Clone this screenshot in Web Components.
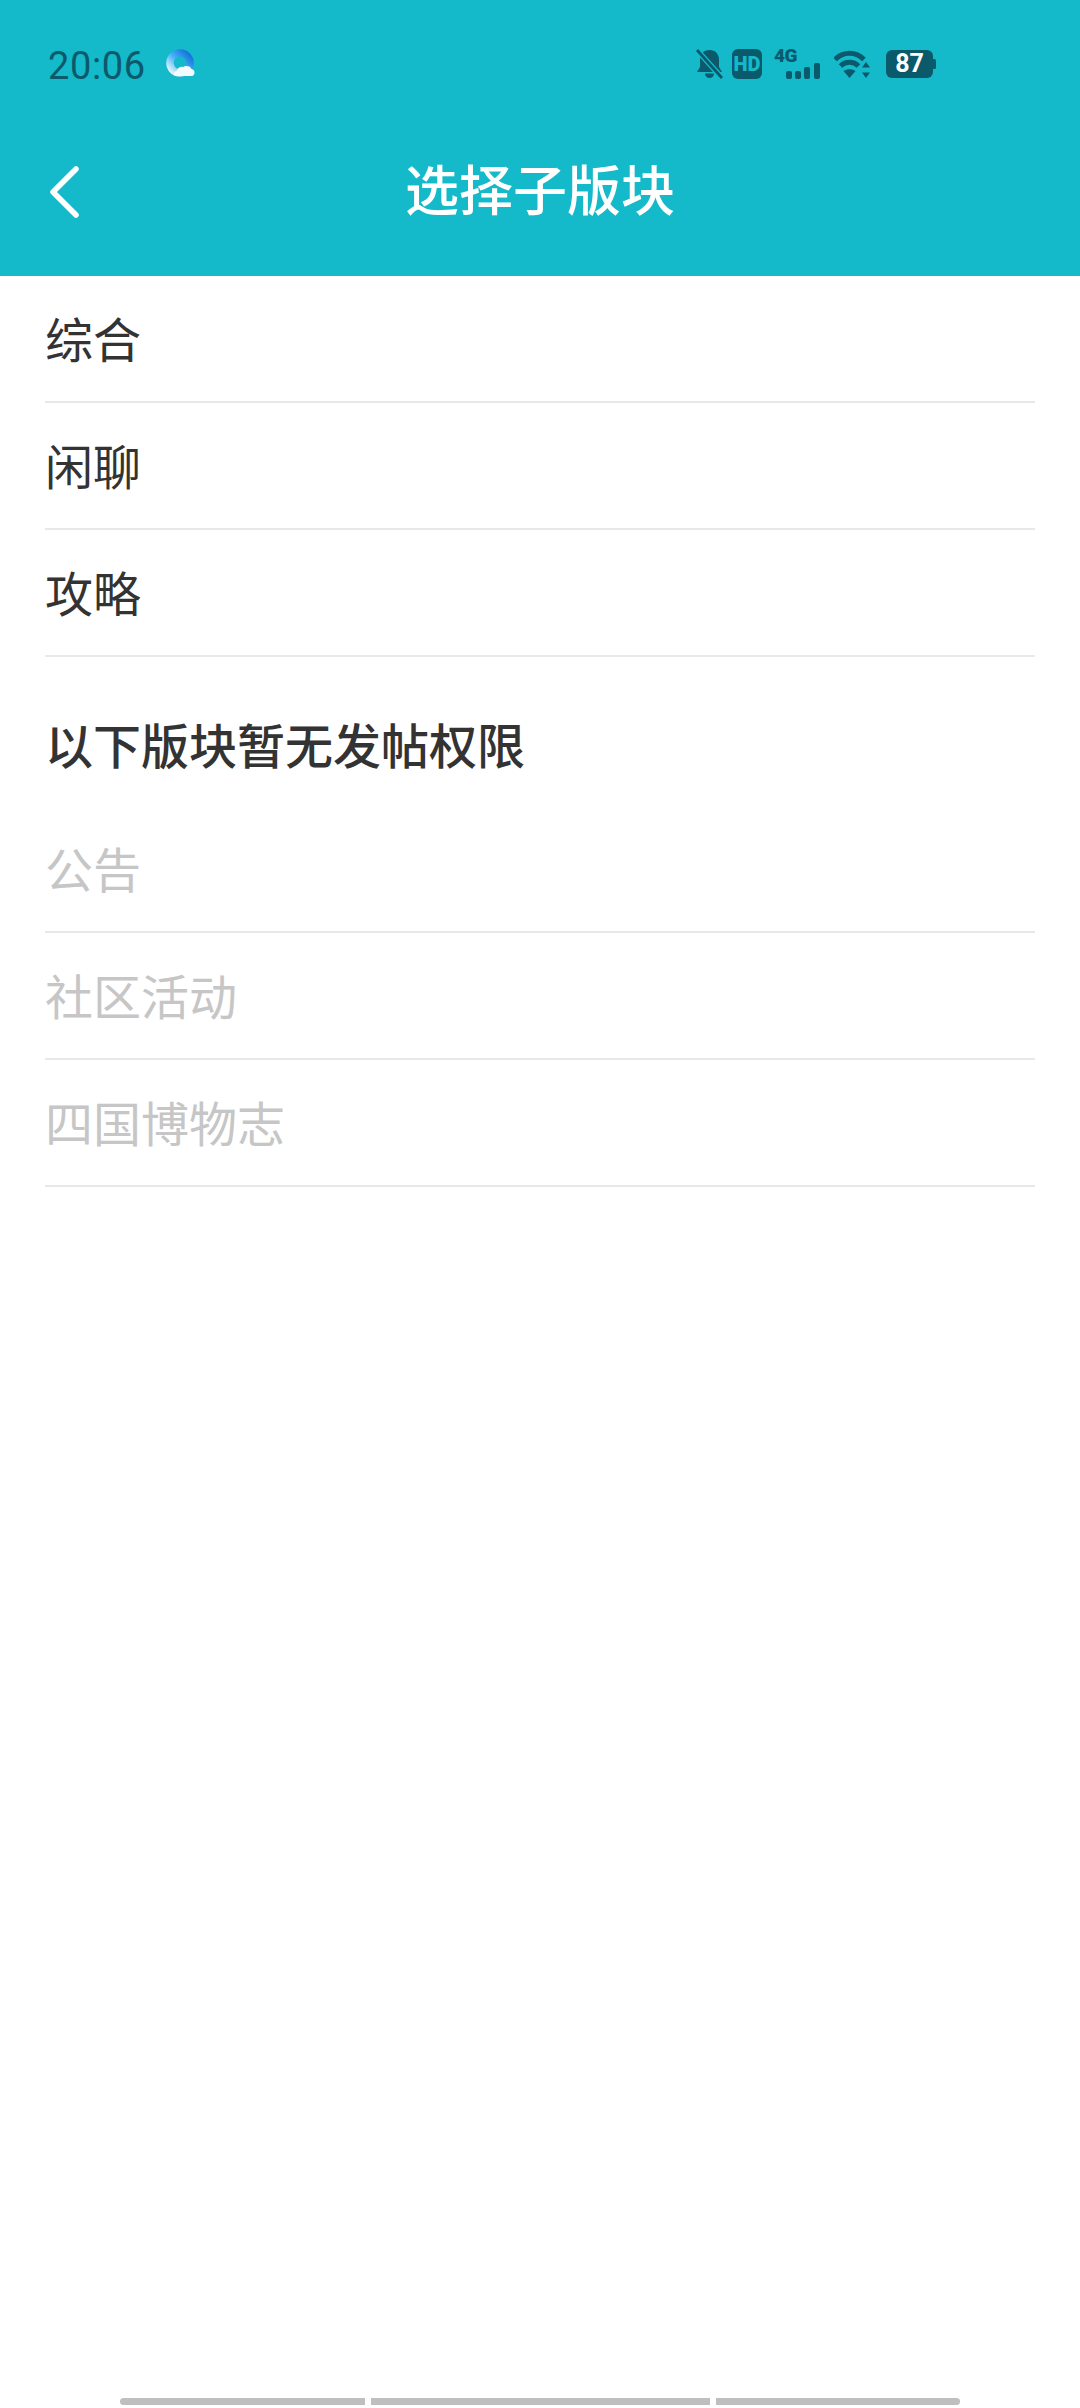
<!DOCTYPE html>
<html lang="zh">
<head>
<meta charset="utf-8">
<title>选择子版块</title>
<style>
  html, body { margin: 0; padding: 0; background: #fff; }
  body { width: 1080px; height: 2408px; overflow: hidden; font-family: "Noto Sans CJK SC", "Noto Sans", sans-serif; display: flex; flex-direction: column; }
</style>
</head>
<body>
<app-header title="选择子版块"></app-header>
<forum-list>
  <forum-row>综合</forum-row>
  <forum-row>闲聊</forum-row>
  <forum-row>攻略</forum-row>
  <section-title>以下版块暂无发帖权限</section-title>
  <forum-row disabled>公告</forum-row>
  <forum-row disabled>社区活动</forum-row>
  <forum-row disabled>四国博物志</forum-row>
</forum-list>
<nav-hint></nav-hint>

<script>
class StatusBar extends HTMLElement {
  constructor() {
    super();
    this.attachShadow({ mode: "open" });
    this.shadowRoot.innerHTML = `
      <style>
        :host { display: flex; align-items: center; height: 128px; padding: 0 144px 0 48px; box-sizing: border-box; color: #0a5a6b; }
        .time { font: 400 38px/1 Roboto, sans-serif; letter-spacing: 0.6px; margin-right: 20px; padding-top: 3px; }
        .cloud { display: block; width: 30px; height: 30px; }
        .icons { margin-left: auto; display: flex; align-items: center; }
        svg { display: block; }
        .hd { width: 30px; height: 30px; border-radius: 6px; background: #0a5a6b; color: #14b9ca; font: 900 20px/30px Roboto, sans-serif; text-align: center; margin: 0 12px 0 9px; }
        .net { position: relative; width: 46px; height: 30px; margin-right: 14px; }
        .net span { position: absolute; left: 0; top: -3px; font: 900 19px/20px Roboto, sans-serif; letter-spacing: -0.5px; }
        .net svg { position: absolute; right: 0; bottom: 0; }
        .batt { position: relative; width: 50px; height: 28px; margin-left: 16px; }
        .batt svg { position: absolute; inset: 0; }
        .batt span { position: absolute; left: 0; right: 3px; top: 0; text-align: center; color: #fff; font: 700 25px/28px Roboto, sans-serif; }
      </style>
      <span class="time">20:06</span>
      <svg class="cloud" viewBox="0 0 30 30">
        <defs>
          <linearGradient id="ring" x1="0" y1="1" x2="1" y2="0">
            <stop offset="0" stop-color="#f2fbfe"/>
            <stop offset="0.5" stop-color="#45b0f6"/>
            <stop offset="1" stop-color="#0f6fd8"/>
          </linearGradient>
        </defs>
        <circle cx="14" cy="14" r="10" fill="none" stroke="url(#ring)" stroke-width="7.5"/>
        <path d="M10 27c-3 0-3-5 .5-5 .8-3 4-5 7-4 1-1 6-2 8 2 4 .3 4 7 0 7z" fill="#f4fbfe"/>
      </svg>
      <div class="icons">
        <svg width="27" height="30" viewBox="0 0 27 30">
          <path d="M13.500 1c6 0 9.500 4 9.500 10v7l3 5H1l3-5v-7C4 5 7.500 1 13.500 1z" fill="currentColor"/>
          <path d="M9 24.500h9a4.500 4.500 0 0 1-9 0z" fill="currentColor"/>
          <path d="M1 1l25 28" stroke="#14b9ca" stroke-width="5.500"/>
          <path d="M1 1l25 28" stroke="currentColor" stroke-width="2.800"/>
        </svg>
        <div class="hd">HD</div>
        <div class="net">
          <span>4G</span>
          <svg width="34" height="16" viewBox="0 0 34 16" fill="currentColor">
            <rect x="0" y="8" width="6" height="8" rx="2"/>
            <rect x="9" y="8" width="6" height="8" rx="2"/>
            <rect x="18" y="4" width="6" height="12" rx="2"/>
            <rect x="28" y="0" width="6" height="16" rx="2"/>
          </svg>
        </div>
        <svg width="36" height="28" viewBox="0 0 36 28" fill="none" stroke="currentColor" stroke-width="5">
          <path d="M1 9.500c8-8.500 21-8.500 29 0"/>
          <path d="M6.500 16c5-5 13-5 18 0"/>
          <path d="M15.500 28l-6-7c3.500-2.500 8.500-2.500 12 0z" fill="currentColor" stroke="none"/>
          <path d="M32 12l4 5.500h-8zM32 28l4-5.500h-8z" fill="currentColor" stroke="none"/>
        </svg>
        <div class="batt">
          <svg width="50" height="28" viewBox="0 0 50 28">
            <rect x="0" y="0" width="47" height="28" rx="6" fill="#0a5a6b"/>
            <path d="M47 9h1.500a1.500 1.500 0 0 1 1.500 1.500v7a1.500 1.500 0 0 1-1.500 1.500H47z" fill="#0a5a6b"/>
          </svg>
          <span>87</span>
        </div>
      </div>
    `;
  }
}

class AppHeader extends HTMLElement {
  constructor() {
    super();
    this.attachShadow({ mode: "open" });
  }

  connectedCallback() {
    this.shadowRoot.innerHTML = `
      <style>
        :host { display: block; height: 276px; background: #14b9ca; flex: none; }
        .bar { display: flex; align-items: center; justify-content: center; position: relative; height: 148px; color: #fff; padding-bottom: 28px; box-sizing: border-box; }
        h1 { margin: 0; font: 500 54px/1 "Noto Sans CJK SC", sans-serif; }
        svg { position: absolute; left: 50px; top: 38px; }
      </style>
      <status-bar></status-bar>
      <div class="bar">
        <svg width="30" height="52" viewBox="0 0 30 52" fill="none" stroke="#fff" stroke-width="5.500" stroke-linecap="round" stroke-linejoin="round">
          <path d="M26 3L3 26l23 23"/>
        </svg>
        <h1>${this.getAttribute("title")}</h1>
      </div>
    `;
  }
}

class ForumList extends HTMLElement {
  constructor() {
    super();
    this.attachShadow({ mode: "open" });
    this.shadowRoot.innerHTML = `
      <style>
        :host { display: flex; flex-direction: column; padding: 0 45px; flex: 1; }
      </style>
      <slot></slot>
    `;
  }
}

class ForumRow extends HTMLElement {
  constructor() {
    super();
    this.attachShadow({ mode: "open" });
    this.shadowRoot.innerHTML = `
      <style>
        :host { display: flex; align-items: center; height: 127px; box-sizing: border-box; border-bottom: 2px solid #e8e8e8; font-size: 48px; line-height: 1; color: #333; padding-bottom: 3px; }
        :host([disabled]) { color: #c6c6c6; }
      </style>
      <slot></slot>
    `;
  }
}

class SectionTitle extends HTMLElement {
  constructor() {
    super();
    this.attachShadow({ mode: "open" });
    this.shadowRoot.innerHTML = `
      <style>
        :host { display: flex; align-items: center; height: 149px; font-size: 48px; font-weight: 500; line-height: 1; color: #333; padding-top: 22px; box-sizing: border-box; }
      </style>
      <slot></slot>
    `;
  }
}

class NavHint extends HTMLElement {
  constructor() {
    super();
    this.attachShadow({ mode: "open" });
    this.shadowRoot.innerHTML = `
      <style>
        :host { display: flex; gap: 6px; padding: 0 120px; height: 10px; box-sizing: border-box; flex: none; }
        i { display: block; height: 7px; background: #bfbfbf; }
        .start { width: 245px; border-radius: 4px 0 0 4px; }
        .middle { width: 339px; }
        .end { width: 244px; border-radius: 0 4px 4px 0; }
      </style>
      <i class="start"></i><i class="middle"></i><i class="end"></i>
    `;
  }
}

customElements.define("status-bar", StatusBar);
customElements.define("app-header", AppHeader);
customElements.define("forum-list", ForumList);
customElements.define("forum-row", ForumRow);
customElements.define("section-title", SectionTitle);
customElements.define("nav-hint", NavHint);
</script>
</body>
</html>
